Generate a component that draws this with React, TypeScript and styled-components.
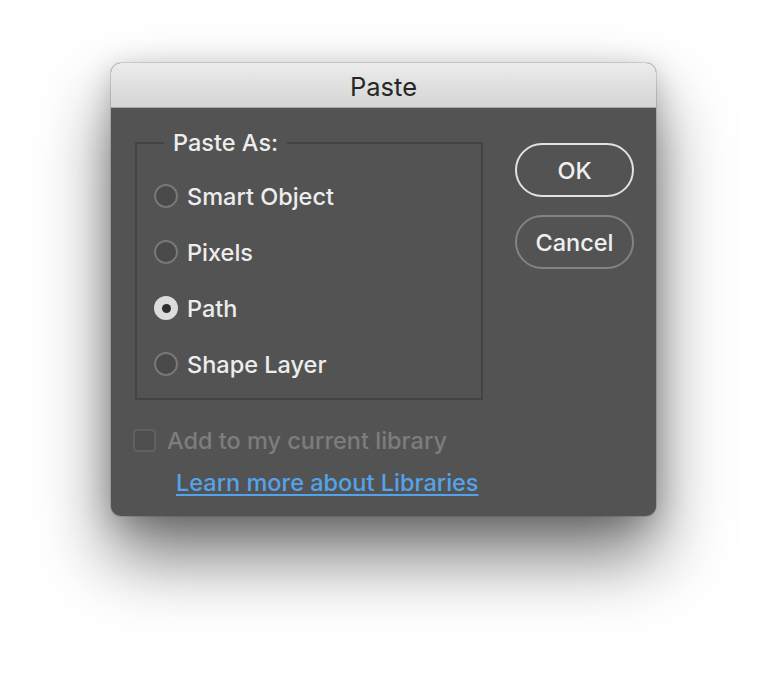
import React from "react";
import styled, { createGlobalStyle } from "styled-components";

const Global = createGlobalStyle`
  html, body { margin: 0; padding: 0; background: #ffffff; }
  body { font-family: Inter, "Liberation Sans", Arial, sans-serif; }
  * { box-sizing: border-box; }
`;

const Page = styled.div`
  padding: 63px 0 0 111px;
  width: 768px;
  height: 676px;
`;

const Dialog = styled.div`
  width: 545px;
  background: #535353;
  border-radius: 10px;
  overflow: hidden;
  box-shadow: 0 40px 70px rgba(0, 0, 0, 0.55), 0 6px 30px rgba(0, 0, 0, 0.2),
    0 0 0 1px rgba(0, 0, 0, 0.12);
`;

const TitleBar = styled.div`
  height: 45px;
  padding-top: 3px;
  background: linear-gradient(#ececec, #d5d5d5);
  border-bottom: 1px solid #a8a8a8;
  display: flex;
  align-items: center;
  justify-content: center;
  font-size: 25.5px;
  color: #262626;
`;

const Body = styled.div`
  padding: 22px 22px 19px 22px;
`;

const TopRow = styled.div`
  display: flex;
  gap: 32px;
  padding-left: 2px;
`;

const Group = styled.fieldset`
  margin: 0;
  width: 348px;
  height: 270px;
  border: 2px solid #434343;
  padding: 28px 0 0 17px;
  display: flex;
  flex-direction: column;
  gap: 32px;
`;

const Legend = styled.legend`
  margin-left: 10px;
  padding: 0 9px;
  font-size: 23.5px;
  font-weight: 500;
  line-height: 26px;
  color: #ededed;
`;

const RadioRow = styled.label`
  display: flex;
  align-items: center;
  gap: 9px;
  height: 24px;
  font-size: 23.5px;
  font-weight: 500;
  color: #ededed;
`;

const Radio = styled.span<{ $checked?: boolean }>`
  width: 24px;
  height: 24px;
  border-radius: 50%;
  flex: none;
  display: flex;
  align-items: center;
  justify-content: center;
  background: ${(p) => (p.$checked ? "#dcdcdc" : "#4a4a4a")};
  border: 2px solid ${(p) => (p.$checked ? "#dcdcdc" : "#777777")};
  &::after {
    content: "";
    width: 9px;
    height: 9px;
    border-radius: 50%;
    background: #2e2e2e;
    display: ${(p) => (p.$checked ? "block" : "none")};
  }
`;

const Buttons = styled.div`
  display: flex;
  flex-direction: column;
  gap: 18px;
  padding-top: 13px;
`;

const Button = styled.button<{ $primary?: boolean }>`
  width: 119px;
  height: 54px;
  border-radius: 27px;
  background: transparent;
  border: 2px solid ${(p) => (p.$primary ? "#e2e2e2" : "#838383")};
  color: #f0f0f0;
  font-family: inherit;
  font-size: 23.5px;
  font-weight: 500;
  padding: 0;
`;

const CheckRow = styled.label`
  display: flex;
  align-items: center;
  gap: 11px;
  margin-top: 26px;
  font-size: 23.5px;
  font-weight: 500;
  color: #7d7d7d;
`;

const Checkbox = styled.span`
  width: 23px;
  height: 23px;
  border-radius: 4px;
  border: 2px solid #606060;
  background: #4e4e4e;
  flex: none;
`;

const Link = styled.a`
  display: inline-block;
  margin: 13px 0 0 43px;
  font-size: 23.5px;
  font-weight: 500;
  color: #54a3ea;
  text-decoration: underline;
  text-underline-offset: 3px;
  text-decoration-thickness: 2px;
`;

const options = [
  { label: "Smart Object", checked: false },
  { label: "Pixels", checked: false },
  { label: "Path", checked: true },
  { label: "Shape Layer", checked: false },
];

export default function App() {
  return (
    <>
      <Global />
      <Page>
        <Dialog>
          <TitleBar>Paste</TitleBar>
          <Body>
            <TopRow>
              <Group>
                <Legend>Paste As:</Legend>
                {options.map((o) => (
                  <RadioRow key={o.label}>
                    <Radio $checked={o.checked} />
                    {o.label}
                  </RadioRow>
                ))}
              </Group>
              <Buttons>
                <Button $primary>OK</Button>
                <Button>Cancel</Button>
              </Buttons>
            </TopRow>
            <CheckRow>
              <Checkbox />
              Add to my current library
            </CheckRow>
            <Link href="#">Learn more about Libraries</Link>
          </Body>
        </Dialog>
      </Page>
    </>
  );
}
